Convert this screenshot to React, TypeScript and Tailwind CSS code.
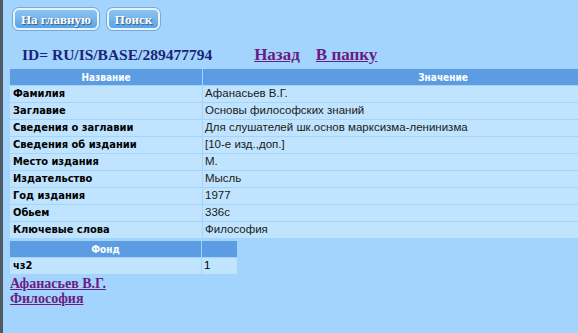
import React from "react";

const rows: [string, string][] = [
  ["Фамилия", "Афанасьев В.Г."],
  ["Заглавие", "Основы философских знаний"],
  ["Сведения о заглавии", "Для слушателей шк.основ марксизма-ленинизма"],
  ["Сведения об издании", "[10-е изд.,доп.]"],
  ["Место издания", "М."],
  ["Издательство", "Мысль"],
  ["Год издания", "1977"],
  ["Обьем", "336с"],
  ["Ключевые слова", "Философия"],
];

const serif = "font-['Liberation_Serif','Times_New_Roman',serif]";
const label = "font-['DejaVu_Sans_Condensed','DejaVu_Sans',sans-serif]";
const value = "font-['Liberation_Sans',Arial,sans-serif]";

function NavButton({ children }: { children: React.ReactNode }) {
  return (
    <button
      className={`h-[22px] px-[6px] rounded-[6px] border-2 border-[#e4f3ff] bg-gradient-to-b from-[#8cc4f2] to-[#5da3e4] shadow-[0_0_0_1px_#7aa9d4] text-white font-bold text-[13px] leading-none [text-shadow:1px_1px_1px_#2a5a8a] ${serif}`}
    >
      {children}
    </button>
  );
}

export default function App() {
  return (
    <div className="w-[578px] h-[333px] overflow-hidden bg-[#a2d4fd] border-l-[3px] border-[#505a64] flex flex-col">
      {/* buttons */}
      <div className="flex gap-[8px] pl-[10px] pt-[8px]">
        <NavButton>На главную</NavButton>
        <NavButton>Поиск</NavButton>
      </div>

      {/* title */}
      <div className={`flex items-baseline pl-[19px] mt-[16px] h-[21px] font-bold leading-none ${serif}`}>
        <span className="text-[#1c2478] text-[15.5px]">ID= RU/IS/BASE/289477794</span>
        <a className="ml-[42px] text-[#6a1c84] underline text-[17px]">Назад</a>
        <a className="ml-[16px] text-[#6a1c84] underline text-[17px]">В папку</a>
      </div>

      {/* main table */}
      <div className="ml-[7px] mt-[2px] flex flex-col gap-px">
        <div className="flex gap-px h-[16px]">
          <div className={`w-[192px] bg-[#5c9ce2] text-white font-bold text-[10px] flex items-center justify-center ${label}`}>
            Название
          </div>
          <div className={`flex-1 bg-[#5c9ce2] text-white font-bold text-[10px] flex items-center justify-center pl-[105px] ${label}`}>
            Значение
          </div>
        </div>
        {rows.map(([k, v]) => (
          <div key={k} className="flex gap-px h-[16px]">
            <div className={`w-[192px] bg-[#c0e4fd] pl-[3px] text-[11px] font-bold text-black flex items-center ${label}`}>
              {k}
            </div>
            <div className={`flex-1 bg-[#c0e4fd] pl-[2px] text-[11.5px] text-[#1a1a1a] flex items-center ${value}`}>
              {v}
            </div>
          </div>
        ))}
      </div>

      {/* fond table */}
      <div className="ml-[7px] mt-[3px] flex flex-col gap-px w-[227px]">
        <div className="flex gap-px h-[16px]">
          <div className={`w-[191px] bg-[#5c9ce2] text-white font-bold text-[10px] flex items-center justify-center ${label}`}>
            Фонд
          </div>
          <div className="flex-1 bg-[#5c9ce2]" />
        </div>
        <div className="flex gap-px h-[16px]">
          <div className={`w-[191px] bg-[#c0e4fd] pl-[3px] text-[11px] font-bold text-black flex items-center ${label}`}>
            чз2
          </div>
          <div className={`flex-1 bg-[#c0e4fd] pl-[2px] text-[11.5px] flex items-center ${value}`}>1</div>
        </div>
      </div>

      {/* links */}
      <div className={`ml-[7px] mt-[2px] flex flex-col font-bold text-[14px] leading-[15px] text-[#6a1c84] ${serif}`}>
        <a className="underline w-fit">Афанасьев В.Г.</a>
        <a className="underline w-fit">Философия</a>
      </div>
    </div>
  );
}
